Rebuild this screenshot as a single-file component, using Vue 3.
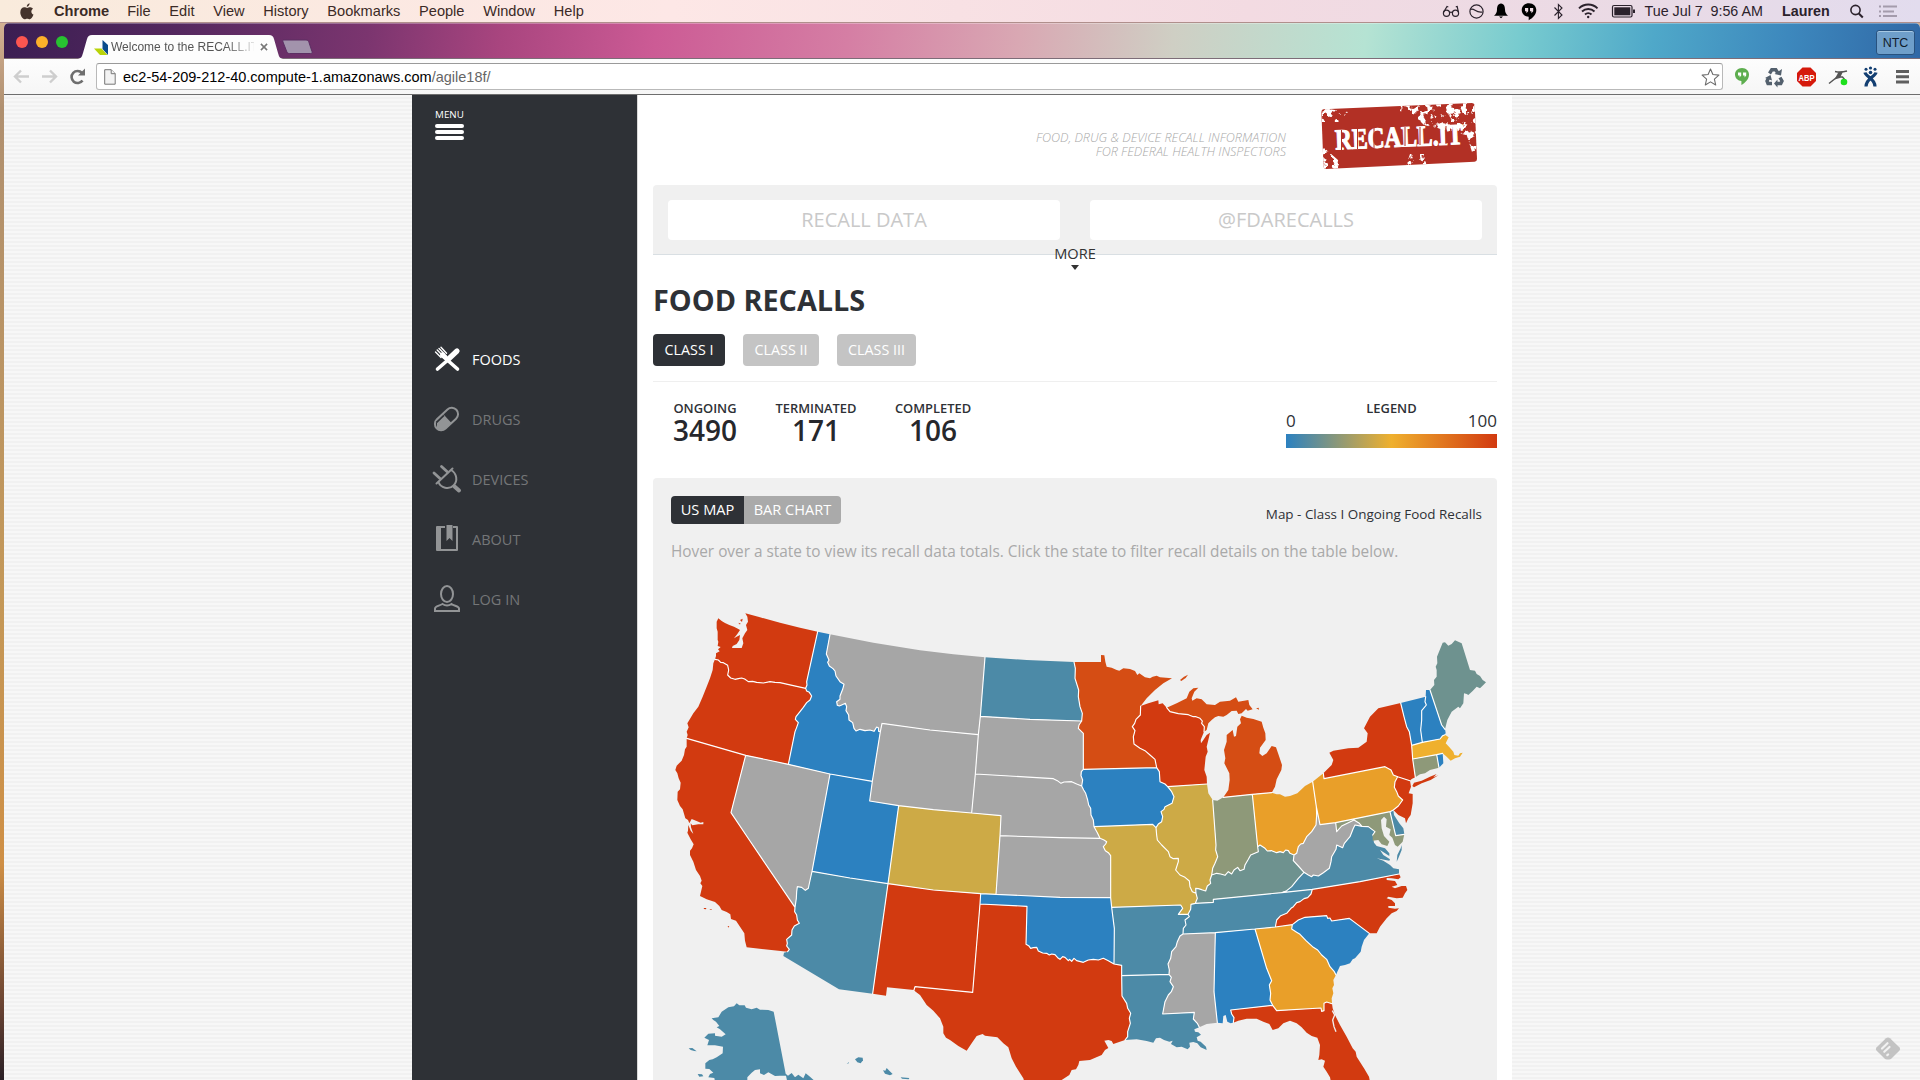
<script setup>
const menus = ['File', 'Edit', 'View', 'History', 'Bookmarks', 'People', 'Window', 'Help']
const nav = [
  { id: 'foods', label: 'FOODS', active: true },
  { id: 'drugs', label: 'DRUGS' },
  { id: 'devices', label: 'DEVICES' },
  { id: 'about', label: 'ABOUT' },
  { id: 'login', label: 'LOG IN' },
]
const classes = ['CLASS I', 'CLASS II', 'CLASS III']
const stats = [
  { id: 'ongoing', label: 'ONGOING', value: '3490' },
  { id: 'terminated', label: 'TERMINATED', value: '171' },
  { id: 'completed', label: 'COMPLETED', value: '106' },
]

// Arcs shared by two states; they are also stroked as the white border mesh.
const shared = {
  waid: '473,125 440,275 441,285 437,295',
  waor: '165,208 175,210 182,217 190,218 203,226 206,240 203,255 212,264 225,268 235,266 245,264 254,267 265,275 278,274 290,277 310,279 330,275 345,277 360,278 400,287 437,295',
  orid: '437,295 440,303 448,307 455,318 450,330 440,338 430,352 420,365 408,380 406,388 415,398 410,412 405,425 385,523',
  orca: '80,445 257,496',
  ornv: '257,496 385,523',
  idnv: '385,523 510,552',
  idut: '510,552 637,574',
  idwy: '637,574 661,425',
  idmt: '510,133 499,192 507,210 503,217 508,228 519,236 525,243 528,258 540,275 552,283 548,298 540,318 540,328 530,335 532,346 538,348 545,345 556,340 560,350 558,362 566,375 567,390 578,398 582,415 588,423 600,418 615,422 630,420 642,424 650,411 655,413 656,424 661,425',
  mtwyw: '661,425 666,400',
  mtwy: '666,400 810,420 955,434',
  mtnd: '975,202 961,379',
  mtsd: '961,379 955,434',
  wysd: '955,434 946,552',
  wyne: '946,552 935,669',
  wyco: '935,669 820,659 716,647',
  wyut: '716,647 629,633 637,574',
  cone: '935,669 1023,677 1020,737',
  coks: '1020,737 1008,913',
  cook: '1008,913 962,911',
  conm: '962,911 820,900 684,881',
  utco: '716,647 684,881',
  utaz: '684,881 570,864 456,844',
  utnv: '510,552 456,844',
  nvaz: '456,844 447,885 445,895 436,901 425,892 412,890 410,905 409,925 405,952',
  canv: '257,496 213,668 268,750 405,952',
  caaz: '405,952 404,965 410,975 412,990 418,1000 403,1008 396,1020 395,1035 380,1048 382,1060 380,1068 388,1078 383,1085',
  aznm: '638,1211 684,881',
  txnm: '762,1200 765,1190 938,1207 960,942',
  oknm: '960,942 962,911',
  txok: '960,942 1101,949 1098,1063 1106,1067 1112,1075 1120,1073 1130,1072 1135,1083 1148,1089 1160,1090 1168,1095 1175,1092 1185,1094 1193,1103 1200,1108 1208,1100 1215,1102 1225,1112 1229,1108 1235,1114 1242,1105 1250,1112 1270,1117 1285,1110 1300,1108 1315,1110 1330,1105 1345,1112 1362,1122',
  okar: '1362,1122 1363,1015 1355,952',
  mook: '1355,952 1352,923',
  ksok: '1352,923 1200,922 1008,913',
  txar: '1362,1122 1385,1126 1385,1157',
  txla: '1385,1157 1386,1218 1400,1240 1403,1255 1412,1270 1408,1285 1411,1300 1403,1325 1403,1340 1395,1350',
  arla: '1385,1157 1527,1153',
  arms: '1569,1032 1560,1038 1552,1055 1548,1070 1535,1085 1532,1105 1524,1122 1528,1140 1527,1153',
  lams: '1527,1153 1534,1162 1530,1175 1540,1190 1534,1205 1525,1215 1515,1235 1508,1272 1603,1267 1600,1287 1612,1300 1618,1312',
  msal: '1672,1298 1662,1205 1666,1028',
  mstn: '1569,1032 1666,1028',
  altn: '1666,1028 1785,1017',
  alga: '1785,1017 1820,1135 1835,1172 1828,1185 1832,1210 1830,1230 1838,1246',
  alfl: '1838,1246 1712,1260 1715,1272 1722,1283 1720,1298',
  gafl: '1838,1246 1850,1262 1983,1254 1985,1264 1992,1262 1992,1240 2000,1236 2016,1241',
  gatn: '1785,1017 1846,1011',
  ganc: '1846,1011 1897,1004',
  gasc: '1897,1004 1895,1017 1910,1027 1920,1033 1938,1052 1960,1072 1973,1080 1985,1095 2000,1108 2010,1130 2023,1145 2028,1155',
  scnc: '1897,1004 1915,990 1935,982 2000,977 2003,985 2010,984 2015,993 2068,985 2128,1030',
  vanc: '2217,852 2100,875 1957,898',
  vatn: '1957,898 1865,908',
  nctn: '1957,898 1953,912 1943,923 1932,926 1920,935 1910,938 1900,950 1893,955 1880,970 1862,977 1850,990 1846,1011',
  kytn: '1865,908 1660,928 1660,937 1606,940',
  kyva: '1865,908 1880,902 1895,890 1915,865 1932,847',
  moky: '1608,910 1612,925 1606,940',
  motn: '1606,940 1593,943 1592,958 1584,973',
  moar: '1584,973 1555,973 1568,955 1562,945 1355,952',
  tnar: '1584,973 1588,980 1575,990 1578,1005 1570,1015 1569,1032',
  nemo: '1302,710 1312,728 1320,745',
  ksmo: '1320,745 1332,750 1340,755 1337,762 1330,770 1336,782 1345,788 1352,797 1352,923',
  neks: '1020,737 1200,743 1320,745',
  neia: '1265,588 1271,600 1277,610 1283,630 1286,645 1292,655 1293,675 1300,690 1302,710',
  sdne: '946,552 1180,566 1192,572 1203,580 1212,576 1235,575 1250,582 1265,588',
  sdia: '1265,588 1268,570 1263,557 1264,545 1270,538',
  sdmn: '1270,538 1270,430 1255,415 1257,405 1265,393',
  ndsd: '961,379 1110,388 1265,393',
  ndmn: '1265,393 1267,370 1260,350 1255,320 1256,300 1245,265 1246,235 1242,216',
  wimn: '1442,348 1441,375 1428,388 1424,400 1417,410 1425,422 1420,440 1422,462 1440,475 1455,482 1470,495 1485,508 1490,533',
  mnia: '1270,538 1490,533',
  iawi: '1490,533 1498,545 1500,575 1515,582 1523,590',
  wiil: '1523,590 1641,582',
  iail: '1523,590 1535,605 1542,620 1536,640 1515,650 1512,658 1503,665 1508,680 1505,695 1495,702 1488,713',
  iamo: '1302,710 1478,703 1488,713',
  ilmo: '1488,713 1490,735 1492,750 1505,765 1525,785 1530,800 1540,806 1555,805 1555,815 1547,840 1560,855 1575,862 1588,873 1590,890 1597,905 1608,910',
  ilky: '1608,910 1607,895 1615,896 1625,899 1637,903 1642,888 1652,880 1650,870 1655,855',
  ilin: '1658,630 1668,765 1667,780 1673,800 1665,820 1658,835 1655,855',
  inmi: '1690,622 1777,613',
  inoh: '1777,613 1793,770',
  inky: '1655,855 1670,850 1682,852 1695,856 1705,845 1715,852 1722,840 1733,832 1740,842 1752,838 1755,825 1765,808 1772,795 1795,785 1793,770',
  miohio: '1777,613 1835,608',
  ohky: '1793,770 1800,765 1815,775 1822,783 1835,782 1850,788 1860,785 1870,788 1877,780 1885,782 1890,790 1902,795',
  kywv: '1902,795 1900,812 1915,828 1932,847',
  ohwv: '1902,795 1910,790 1915,770 1922,762 1930,760 1940,740 1955,725 1968,705 1970,675 1969,650',
  ohpa: '1969,650 1958,575',
  pany: '1990,550 1992,566 2175,530 2193,540 2200,555 2213,560',
  njny: '2213,560 2250,572',
  panj: '2213,560 2205,575 2203,592 2210,605 2215,618 2228,630 2215,648 2200,660',
  pade: '2200,660 2190,665',
  pamd: '2190,665 2027,698',
  pawv: '2027,698 1980,704 1969,650',
  wvmd: '2027,698 2030,725 2045,708 2065,698 2082,690 2098,700 2106,709',
  vawv: '1932,847 1945,855 1955,860 1960,855 1975,858 1990,848 2008,835 2013,815 2015,800 2028,778 2030,765 2048,773 2053,760 2070,740 2080,715 2085,705 2106,709',
  vamd: '2106,709 2125,710 2145,725 2138,735',
  demd: '2190,665 2207,737 2233,733',
  nyvt: '2222,339 2232,380 2240,410 2248,425 2255,466',
  nyma: '2255,466 2258,507',
  nyct: '2258,507 2266,562',
  vtnh: '2297,320 2295,335 2299,345 2285,362 2285,390 2282,420 2287,457',
  vtma: '2255,466 2287,457',
  nhma: '2287,457 2340,447 2348,437 2355,434',
  nhme: '2310,300 2345,405 2355,418',
  mari: '2348,490 2330,494',
  mact: '2330,494 2258,507',
  ctri: '2330,494 2337,533',
  wimi: '1520,353 1530,365 1555,371 1585,374 1600,380 1608,380 1620,385 1627,393 1625,400 1633,410 1632,425',
}

// Coasts and national borders, used by one state only.
const outer = {
  wa: '165,208 168,198 168,190 179,184 174,178 182,171 173,168 175,155 173,150 173,125 170,115 170,95 175,85 185,93 195,99 208,105 222,110 235,117 240,120 232,132 222,145 230,140 240,135 238,150 230,162 218,168 216,174 232,174 245,174 250,160 247,145 255,130 262,120 258,105 264,95 262,80 256,70 300,82 360,98 420,113 473,125',
  or: '165,208 160,220 158,240 150,265 140,290 128,320 115,350 100,370 88,390 82,400 86,412 80,425 83,435 80,445',
  id: '473,125 510,133',
  mt: '510,133 640,158 780,181 880,193 975,202',
  nd: '975,202 1100,210 1242,216',
  ca: '80,445 80,470 75,478 72,495 65,512 50,527 46,540 52,550 56,565 62,578 60,598 53,605 52,630 60,648 68,658 76,685 84,690 88,700 95,687 108,692 122,698 130,696 130,703 115,703 97,706 92,700 93,712 100,732 92,722 85,705 84,722 82,728 92,748 101,763 96,775 90,782 90,795 100,815 108,840 120,858 125,872 121,880 127,888 120,918 140,928 165,936 178,948 185,960 200,966 211,973 213,987 228,992 240,1010 253,1030 255,1052 260,1072 383,1085',
  az: '383,1085 372,1088 370,1098 537,1198 638,1211',
  nm: '638,1211 678,1217 681,1192 762,1200',
  tx: '762,1200 765,1204 780,1215 800,1245 820,1262 840,1285 850,1310 850,1330 858,1343 870,1350 895,1368 920,1382 935,1360 950,1338 968,1332 975,1337 1012,1342 1030,1360 1045,1372 1055,1405 1068,1430 1090,1465 1100,1500 1185,1500 1205,1470 1228,1455 1235,1440 1248,1438 1255,1425 1258,1413 1290,1410 1325,1395 1335,1380 1345,1374 1333,1352 1345,1350 1355,1353 1360,1362 1395,1350',
  la: '1395,1350 1430,1348 1460,1353 1480,1358 1488,1345 1500,1343 1512,1350 1528,1355 1538,1352 1533,1362 1550,1372 1565,1370 1583,1378 1590,1370 1588,1358 1600,1356 1612,1360 1622,1372 1640,1380 1638,1370 1622,1355 1613,1352 1610,1342 1623,1334 1615,1327 1605,1325 1603,1318 1618,1312',
  ms: '1618,1312 1640,1302 1672,1298',
  al: '1672,1298 1688,1300 1690,1278 1697,1275 1702,1295 1712,1300 1720,1298',
  fl: '1720,1298 1735,1292 1760,1286 1790,1286 1810,1295 1828,1302 1838,1320 1855,1315 1870,1300 1890,1292 1910,1300 1925,1312 1940,1328 1955,1338 1972,1343 1980,1365 1978,1395 1975,1410 1985,1408 1995,1412 1990,1430 2000,1445 2010,1462 2018,1500 2135,1500 2127,1460 2112,1435 2090,1400 2087,1385 2078,1375 2060,1340 2040,1305 2025,1275 2018,1255 2016,1241',
  ga: '2028,1155 2020,1170 2022,1185 2017,1195 2020,1210 2015,1225 2016,1241',
  sc: '2128,1030 2112,1050 2105,1070 2102,1085 2085,1105 2078,1108 2070,1120 2055,1125 2040,1128 2032,1145 2028,1155',
  nc: '2128,1030 2150,1030 2160,1010 2180,985 2195,970 2210,963 2217,955 2205,956 2185,953 2185,948 2205,948 2205,940 2195,930 2180,925 2185,920 2210,925 2228,923 2235,910 2242,900 2238,888 2225,888 2205,895 2195,890 2212,885 2205,873 2180,870 2180,864 2195,865 2215,868 2222,862 2217,852',
  mn: '1242,216 1323,216 1323,195 1333,196 1336,215 1340,230 1355,233 1370,240 1378,242 1390,235 1410,237 1425,243 1432,255 1438,250 1455,262 1470,265 1478,260 1490,257 1500,262 1536,265 1510,280 1485,300 1460,325 1442,348',
  win: '1442,348 1465,340 1495,331 1496,343 1508,340 1520,353',
  wie: '1632,425 1622,450 1623,460 1630,450 1640,435 1650,428 1645,450 1640,470 1643,485 1637,500 1633,540 1640,560 1641,582',
  mi1: '1520,353 1550,340 1580,325 1588,305 1600,295 1615,293 1603,305 1595,325 1597,332 1610,325 1625,328 1640,343 1665,345 1680,335 1710,332 1728,322 1735,335 1765,330 1768,345 1778,358 1763,362 1758,357 1745,370 1735,372 1730,362 1715,363 1700,375 1690,380 1675,378 1665,382 1655,390 1645,400 1640,420 1632,425',
  mi2: '1690,622 1705,600 1709,570 1708,550 1693,520 1696,505 1692,480 1700,455 1700,435 1718,420 1722,440 1728,438 1732,410 1743,400 1740,388 1745,377 1760,383 1780,387 1805,395 1810,413 1816,430 1817,450 1800,473 1798,490 1807,498 1820,490 1835,468 1848,472 1856,495 1866,525 1864,540 1850,568 1845,590 1835,608',
  il: '1641,582 1645,610 1658,630',
  inn: '1658,630 1672,632 1690,622',
  oh: '1835,608 1850,613 1860,613 1875,620 1890,618 1912,610 1935,588 1958,575',
  pa: '1958,575 1990,550',
  ny: '1990,550 2015,525 2020,510 2008,488 2020,482 2065,475 2095,473 2120,455 2123,430 2112,415 2130,380 2155,355 2222,339',
  nys: '2266,562 2255,567 2250,572',
  nj: '2200,660 2215,675 2235,685 2238,700 2245,685 2252,675 2258,640 2258,612 2246,610 2253,590 2250,572',
  de: '2200,660 2202,675 2218,700 2230,715 2233,733',
  md: '2138,735 2138,752 2155,750 2165,763 2182,768 2188,755 2172,738 2165,715 2163,690 2172,680 2180,688 2178,710 2192,718 2188,735 2197,743 2205,765 2213,770 2228,755 2233,733',
  va: '2138,735 2142,758 2150,768 2175,775 2188,790 2188,798 2160,780 2170,795 2190,808 2188,812 2150,805 2170,812 2190,825 2200,835 2217,838 2217,852',
  vt: '2222,339 2297,320',
  nh: '2297,320 2298,300 2310,300',
  nhc: '2355,418 2357,428 2355,434',
  me: '2310,300 2323,285 2322,270 2330,260 2330,240 2327,230 2332,220 2331,200 2348,158 2355,157 2365,167 2375,162 2385,151 2405,160 2430,240 2445,242 2450,252 2460,258 2468,270 2478,277 2470,285 2460,295 2450,290 2438,303 2425,315 2420,312 2412,310 2410,340 2400,355 2395,350 2385,358 2375,365 2362,390 2355,418',
  ma: '2355,434 2366,442 2357,460 2367,470 2380,485 2383,495 2395,497 2400,490 2408,488 2400,500 2385,505 2372,512 2360,500 2348,490',
  ri: '2348,490 2350,520 2337,533',
  ct: '2337,533 2310,540 2295,550 2280,553 2266,562',
}

const RED = '#d23a10', BLUE = '#2c81c0', GRAY = '#a6a6a6', TEAL = '#4c8aa7'
const GOLD = '#cdaa46', ORANGE = '#e99f29', RUST = '#d54d14', SAGE = '#8e9979', SEA = '#6e928f'

const states = [
  ['WA', RED, 'wa waid -waor'],
  ['OR', RED, 'waor orid -ornv -orca -or'],
  ['CA', RED, 'orca canv caaz -ca'],
  ['ID', BLUE, 'id idmt -idwy -idut -idnv -orid -waid'],
  ['NV', GRAY, 'ornv idnv utnv nvaz -canv'],
  ['MT', GRAY, 'mt mtnd mtsd -mtwy -mtwyw -idmt'],
  ['WY', GRAY, 'mtwyw mtwy wysd wyne wyco wyut idwy'],
  ['UT', BLUE, 'idut -wyut utco utaz -utnv'],
  ['CO', GOLD, '-wyco cone coks cook conm -utco'],
  ['AZ', TEAL, 'az aznm utaz nvaz caaz'],
  ['NM', RED, 'nm txnm oknm conm -aznm'],
  ['ND', TEAL, 'nd -ndmn -ndsd -mtnd'],
  ['SD', GRAY, 'ndsd -sdmn -sdia -sdne -wysd -mtsd'],
  ['NE', GRAY, 'sdne neia nemo -neks -cone -wyne'],
  ['KS', GRAY, 'neks ksmo ksok -coks'],
  ['OK', BLUE, '-ksok -mook -okar -txok oknm -cook'],
  ['TX', RED, 'txok txar txla -tx txnm'],
  ['MN', RUST, 'mn wimn -mnia sdmn ndmn'],
  ['IA', BLUE, 'mnia iawi iail -iamo -neia sdia'],
  ['MO', GOLD, 'iamo ilmo moky motn moar mook -ksmo -nemo'],
  ['AR', TEAL, '-moar tnar arms -arla -txar -okar'],
  ['LA', TEAL, 'arla lams -la -txla'],
  ['WI', RED, 'win wimi wie -wiil -iawi -wimn'],
  ['IL', GOLD, 'wiil il ilin -ilky -ilmo -iail'],
  ['IN', SAGE, 'inn inmi inoh -inky -ilin'],
  ['MI-UP', RUST, 'mi1 -wimi'],
  ['MI', RUST, 'mi2 -miohio -inmi'],
  ['OH', ORANGE, 'miohio oh -ohpa -ohwv -ohky -inoh'],
  ['KY', SEA, 'ilky inky ohky kywv -kyva kytn -moky'],
  ['TN', TEAL, '-kytn -vatn nctn -gatn -altn -mstn -tnar -motn'],
  ['MS', GRAY, 'mstn -msal -ms -lams -arms'],
  ['AL', BLUE, 'altn alga alfl -al msal'],
  ['GA', ORANGE, 'gatn ganc gasc ga -gafl -alga'],
  ['FL', RED, 'gafl -fl -alfl'],
  ['SC', BLUE, 'scnc sc -gasc'],
  ['NC', RED, '-nc -scnc -ganc -nctn -vanc'],
  ['VA', TEAL, 'vawv vamd va vanc vatn kyva'],
  ['WV', GRAY, '-pawv wvmd -vawv -kywv ohwv'],
  ['PA', ORANGE, 'pa pany panj pade pamd pawv ohpa'],
  ['MD', SAGE, '-pamd demd -md -vamd -wvmd'],
  ['DE', TEAL, 'de -demd -pade'],
  ['NJ', RED, 'njny -nj -panj'],
  ['NY', RED, 'ny nyvt nyma nyct nys -njny -pany'],
  ['VT', BLUE, 'vt vtnh -vtma -nyvt'],
  ['NH', BLUE, 'nh nhme nhc -nhma -vtnh'],
  ['ME', SEA, 'me -nhme'],
  ['MA', '#efb02e', 'nhma ma mari mact -nyma vtma'],
  ['CT', SAGE, '-mact ctri ct -nyct'],
  ['RI', BLUE, '-mari ri -ctri'],
]

const pts = (s) => s.split(' ')

// Joins arcs end to end, turning an arc round when its tail is the closer end.
function ring(spec) {
  const arcs = spec.split(' ').map((n) => {
    const key = n.replace('-', '')
    return pts(shared[key] || outer[key])
  })
  const out = [...arcs[0]]
  if (arcs[1] && !arcs[1].includes(out[out.length - 1]) && arcs[1].includes(out[0])) out.reverse()
  if (arcs.length === 2 && spec.startsWith('-')) out.reverse()
  let rest = arcs.slice(1)
  while (rest.length) {
    const tail = out[out.length - 1]
    const i = rest.findIndex((a) => a[0] === tail || a[a.length - 1] === tail)
    const k = i < 0 ? 0 : i
    const a = rest[k]
    out.push(...(a[a.length - 1] === tail ? [...a].reverse() : a))
    rest = rest.filter((_, j) => j !== k)
  }
  return 'M' + out.join('L') + 'Z'
}

const statePaths = states.map(([id, fill, spec]) => ({ id, fill, d: ring(spec) }))
const mesh = Object.values(shared).map((s) => 'M' + pts(s).join('L')).join('')

const islands = [
  [RED, '2257,588 2262,578 2285,572 2310,560 2330,552 2320,562 2335,556 2312,570 2285,580 2262,592'],
  [TEAL, '2225,765 2222,775 2212,795 2210,815 2215,805 2225,780'],
  [RUST, '1560,270 1572,260 1584,254 1577,264 1564,273'],
  [RUST, '1788,355 1796,353 1797,359'],
  [RED, '131,954 139,954 138,958 132,957'],
  [RED, '148,957 155,957 154,960'],
  [RED, '203,1008 208,1009 205,1013'],
  [RED, '240,90 248,86 246,96'],
  [RED, '236,98 243,102 237,103'],
  [TEAL, '86,1375 97,1374 110,1384 103,1383 92,1380'],
  [TEAL, '113,1452 126,1453 130,1459 118,1460'],
  [TEAL, '585,1408 595,1402 608,1403 609,1411 602,1420 592,1417'],
  [TEAL, '560,1422 567,1416 566,1420'],
  [TEAL, '669,1441 676,1442 680,1434 688,1442 698,1452 690,1456 675,1451'],
  [TEAL, '722,1462 748,1464 746,1468 726,1466'],
  [TEAL, '155,1285 175,1282 185,1265 205,1252 222,1249 230,1240 238,1246 254,1246 258,1253 275,1258 290,1253 300,1259 325,1260 341,1265 377,1451 384,1457 395,1449 405,1462 415,1454 430,1465 437,1450 450,1460 463,1472 463,1490 385,1490 378,1457 360,1457 345,1458 325,1447 312,1455 300,1450 300,1438 285,1440 275,1448 262,1462 262,1490 168,1490 163,1464 145,1462 150,1452 160,1448 148,1437 136,1436 136,1420 148,1410 158,1408 170,1402 188,1390 189,1370 165,1366 142,1366 147,1350 133,1343 145,1331 165,1330 165,1337 185,1340 197,1333 180,1318 170,1312 178,1308 168,1295 160,1290'],
].map(([fill, p]) => ({ fill, d: 'M' + pts(p).join('L') + 'Z' }))
</script>

<template>
  <div class="screen">
    <div class="menubar">
      <svg class="apple" width="14" height="17" viewBox="0 0 14 17"><path fill="#45342c" d="M9.6.2C9.7 1.9 8.400 3.600 6.800 3.700 6.600 2.100 8 .5 9.600.2ZM12.900 5.700C10.600 7.200 11 10.500 13.500 11.600 12.700 13.800 11.200 16.300 9.800 16.300 8.800 16.300 8.400 15.700 7.200 15.700 6 15.700 5.500 16.300 4.700 16.300 2.600 16.400.3 12.500.3 9.300.3 6.100 2.300 4.300 4.300 4.300 5.500 4.300 6.400 5 7.200 5 7.900 5 9.100 4.200 10.500 4.300 11.400 4.400 12.300 4.800 12.900 5.700Z"/></svg>
      <b class="app">Chrome</b>
      <span v-for="m in menus" :key="m" class="mi">{{ m }}</span>
      <div class="tray">
        <svg class="t-icons" width="200" height="22" viewBox="1435 0 200 22" fill="none" stroke="#2b222c" stroke-width="1.200">
          <circle cx="1444.500" cy="13.300" r="3.100"/><circle cx="1453.500" cy="13.300" r="3.100"/><path d="M1447.600 12.600q1.400-1 2.800 0M1441.600 12.300 1445 6.500l1.300.5M1456.400 12.300 1455.200 6.500l-1.400.4"/>
          <circle cx="1474.500" cy="11.500" r="6.600"/><path d="M1468.500 9.500c4-2 5 4 12 2.500"/>
          <path fill="#000" stroke="none" d="M1499 3.500c-3.200.6-4 3-4 6 0 3-1 4.500-3 6.300h14c-2-1.800-3-3.300-3-6.300 0-3-.8-5.400-4-6zM1497 16.500h4l-2 1.800z"/>
          <path fill="#000" stroke="none" d="M1527 3.200c-4.500 0-7.300 3-7.300 6.800 0 3.700 3 6.600 7 6.700v3.500c4-2 7.600-5.700 7.600-10.200 0-3.800-2.800-6.800-7.300-6.800z"/><path fill="#eedbe3" stroke="none" d="M1523 8h3.200v3.200l-1.800 2v-2H1523zM1528 8h3.200v3.200l-1.800 2v-2H1528z"/>
          <path stroke-width="1.100" d="M1552.500 7.500l7.500 7.500-3.600 3.500V4.500l3.600 3.500-7.500 7.500"/>
          <path stroke-width="1.900" d="M1577 8.300a13 13 0 0 1 18.500 0M1580 11.500a9 9 0 0 1 12.500 0M1583 14.500a4.800 4.800 0 0 1 6.500 0"/><circle cx="1586.200" cy="17" r="1.200" fill="#2b222c" stroke="none"/>
          <rect x="1610.500" y="5.500" width="19.500" height="11.500" rx="1.500"/><rect x="1612.300" y="7.300" width="16" height="8" fill="#2b222c" stroke="none"/><path stroke-width="2" d="M1632 9.500v3.500"/>
        </svg>
        <span class="date">Tue Jul 7</span><span class="time">9:56 AM</span><b class="user">Lauren</b>
        <svg class="find" width="50" height="22" viewBox="1848 0 50 22" fill="none" stroke="#2b222c" stroke-width="1.600"><circle cx="1855.500" cy="10" r="4.600"/><path stroke-width="2" d="M1858.800 13.500l4 4"/><path stroke="#a49bac" stroke-width="2" d="M1883 6.500h14M1883 11.500h11M1883 16h14M1879 6.500h2M1879 11.500h2M1879 16h2"/></svg>
      </div>
    </div>

    <div class="window">
      <div class="tabs">
        <span class="light l1"></span><span class="light l2"></span><span class="light l3"></span>
        <div class="tab">
          <svg class="tabshape" width="206" height="24" viewBox="0 0 206 24"><path fill="#fdfdfd" d="M0 24C4 23 4 21 5 18L9 4C10 1 11 0 14 0H191C194 0 195 1 196 4L200 18C201 21 201 23 205 24Z"/></svg>
          <svg class="fav" width="15" height="15" viewBox="0 0 15 15"><path fill="#0a4b8c" d="M8.500 0 14 5v10L8.500 9z"/><path fill="#b9d309" d="M0 8.500h7.500l6 6.500H6z"/></svg>
          <span class="tabtitle">Welcome to the RECALL.IT</span>
          <svg class="x" width="8" height="8" viewBox="0 0 9 9" stroke="#777" stroke-width="1.700"><path d="M1 1l7 7M8 1 1 8"/></svg>
        </div>
        <svg class="newtab" width="32" height="16" viewBox="0 0 32 16"><path fill="#a293ac" stroke="#5c2f63" d="M3 1h22c2 0 2.500 1 3 2.500l3 9c.5 1.500 0 2-1.500 2H8.500c-2 0-2.500-1-3-2.500l-3.500-9C1.500 1.500 2 1 3 1z"/></svg>
        <span class="ntc">NTC</span>
      </div>

      <div class="toolbar">
        <svg class="tb-left" width="84" height="34" viewBox="10 60 84 34" fill="none" stroke-width="2.400">
          <path stroke="#cecece" d="M29 76.500H15.500M21 70.500l-6 6 6 6M42 76.500h13.500M50 70.500l6 6-6 6"/>
          <path stroke="#6e6e6e" stroke-width="2.600" d="M82.500 80.500a6 6 0 1 1-.5-7.500"/><path fill="#6e6e6e" d="M85 68.500v7h-7z"/>
        </svg>
        <div class="url">
          <svg width="12" height="16" viewBox="0 0 12 16" fill="#f3f3f3" stroke="#777"><path d="M.7.7h6.500l4 4v10.500H.7z"/><path d="M7.200.7v4h4"/></svg>
          <span class="addr">ec2-54-209-212-40.compute-1.amazonaws.com<i>/agile18f/</i></span>
          <svg class="star" width="19" height="18" viewBox="0 0 19 18"><path fill="#fff" stroke="#6b6b6b" stroke-width="1.100" stroke-linejoin="round" d="M9.500 1l2.400 5.500 6 .6-4.500 4 1.300 5.900-5.200-3.100L4.300 17l1.300-5.900-4.500-4 6-.6z"/></svg>
        </div>
        <svg class="ext" width="186" height="34" viewBox="1731 60 186 34">
          <path fill="#5eae4f" d="M1742 68c-4.400 0-7 3-7 6.500 0 3.700 3 6.400 6.400 6.500v4c3.600-2 7.600-5.700 7.600-10.500 0-3.500-2.600-6.500-7-6.500z"/><path fill="#fff" d="M1738 72.500h3.200v3l-1.600 2v-2H1738zM1743 72.500h3.200v3l-1.600 2v-2H1743z"/>
          <g fill="none" stroke="#53606d" stroke-width="3.400"><path d="M1769.500 73.500l2.300-3.700h4l2 3.200M1780 77.500l2 3.500-1.200 2.500h-3.800M1772 83.500h-4l-1-2.500 1.500-3"/></g><path fill="#53606d" d="M1774.500 74l6.500 1.500 1-6.500zM1777.500 79.500v8l-3.500-4zM1765 78l5.500-3 1.500 5.500z"/>
          <path fill="#d5190b" d="M1802.500 67.500h8l5.500 5.500v8l-5.500 5.500h-8l-5.500-5.500v-8z"/>
          <text x="1806.500" y="81" text-anchor="middle" font-size="9.800" font-weight="bold" textLength="16" lengthAdjust="spacingAndGlyphs" fill="#fff">ABP</text>
          <path fill="none" stroke="#555" stroke-width="1.500" d="M1829 83.500l10-8M1835 71.500c4 1 7 1 12-.5M1838 77h4.500l2.500 3"/><path fill="#555" d="M1834.500 79.500l4-7.500 4.500-.5-3 6.500z"/><circle cx="1844" cy="82" r="3.300" fill="#1de01d"/>
          <g fill="none" stroke="#133f72" stroke-width="3.200"><path d="M1865 72.500c1 4.500 10 5.500 10 14M1876 72.500c-1 4.500-10 5.500-10 14"/></g><g fill="#133f72"><circle cx="1866" cy="69.200" r="1.500"/><circle cx="1870.500" cy="68" r="1.600"/><circle cx="1875" cy="69.200" r="1.500"/><circle cx="1870.500" cy="72.500" r="1.800"/></g>
          <path stroke="#5f5f5f" stroke-width="3" d="M1896 71.500h13M1896 76.700h13M1896 81.900h13"/>
        </svg>
      </div>

      <div class="page">
        <aside class="side">
          <div class="menu"><span>MENU</span><i></i><i></i><i></i></div>
          <nav>
            <div v-for="n in nav" :key="n.id" class="navitem" :class="{ on: n.active }">
              <svg v-if="n.id === 'foods'" width="30" height="30" viewBox="0 0 30 30" fill="none" stroke="#fff" stroke-linecap="round"><path stroke-width="3.600" d="M5.500 25 16.500 15.500"/><path stroke-width="5.200" d="M16 15.500 25 7"/><path stroke-width="3.600" d="M13 14 25.500 25"/><path stroke-width="1.400" d="M3.500 8 9 13.500M5.200 6 10.500 11.500M7 4.500 12.500 10M9 3.200l5.500 6"/><path stroke-width="5" d="M10.500 11 13 13"/></svg>
              <svg v-else-if="n.id === 'drugs'" width="30" height="30" viewBox="0 0 30 30" fill="none"><g transform="rotate(-43 14.500 15)"><rect x="1" y="8.700" width="27" height="12.600" rx="6.300" stroke="#929496" stroke-width="2"/><path fill="#929496" d="M7.300 9H15.500v9.500 2.800H7.300a6.200 6.200 0 0 1-6-6.300z"/><path fill="#2e3136" d="M5 9.800h10V11.500H5z"/></g></svg>
              <svg v-else-if="n.id === 'devices'" width="30" height="30" viewBox="0 0 30 30" fill="none" stroke="#929496" stroke-width="2" stroke-linecap="round"><path d="M4.500 19.500 20.500 4.500M6.500 18c2 6 10.500 8 15 3.500s3.500-12-2.500-15.500"/><path stroke-width="2.800" d="M2 9l6 5.500M9.500 2.500l6 5.500"/><path stroke-width="4" d="M22.500 22.500 27 26.500"/></svg>
              <svg v-else-if="n.id === 'about'" width="30" height="30" viewBox="0 0 30 30" fill="#929496"><path d="M4 3q0-1 1-1h8v2H9v21h15V4h-3V2h4q1 0 1 1v23q0 1-1 1H5q-1 0-1-1z"/><path d="M14.500 1h6v16l-3-3-3 3z"/></svg>
              <svg v-else width="30" height="30" viewBox="0 0 30 30" fill="none" stroke="#929496" stroke-width="2"><ellipse cx="15" cy="10" rx="6" ry="8"/><path d="M10.500 20C7 22 3 22 3 24.500V27h24v-2.500C27 22 22 22 19.500 20c-3 2-6 2-9 0z"/></svg>
              <span>{{ n.label }}</span>
            </div>
          </nav>
        </aside>

        <main class="main">
          <header class="head">
            <p class="tagline">FOOD, DRUG &amp; DEVICE RECALL INFORMATION<br>FOR FEDERAL HEALTH INSPECTORS</p>
            <svg class="logo" width="160" height="72" viewBox="1320 100 160 72">
              <defs>
                <filter id="wear" x="0" y="0" width="100%" height="100%">
                  <feTurbulence type="fractalNoise" baseFrequency="0.150 0.130" numOctaves="4" seed="8"/>
                  <feColorMatrix values="0 0 0 0 1  0 0 0 0 1  0 0 0 0 1  11 0 0 0 -5.700"/>
                </filter>
                <clipPath id="worn"><path d="M1396 101h84v26l-14 8-42-10-10-10-22-6zM1462 120h20v28l-10 4zM1404 172l6-18 14 0 4 18zM1322 146l16 14 4 12h-20zM1322 108l26 4-10 10h-16z"/></clipPath>
                <clipPath id="stamp"><path d="M1323.500 109.300 1472 103q2.500 0 2.700 2.500L1477 159q0 2.500-2.500 2.800L1326 169q-2.300 0-2.500-2.500L1321.400 112q0-2.500 2.100-2.700z"/></clipPath>
              </defs>
              <g clip-path="url(#stamp)">
                <rect x="1320" y="100" width="160" height="72" fill="#b23025"/>
                <g clip-path="url(#worn)"><rect x="1320" y="100" width="160" height="72" filter="url(#wear)"/></g>
              </g>
              <text class="logotext" x="1335.500" y="149.500" transform="rotate(-2.500 1335 149)" textLength="128" lengthAdjust="spacingAndGlyphs">RECALL.IT</text>
              <path stroke="#b23025" stroke-width="1" d="M1341.500 130v20M1357.500 129v20M1374 128v20M1405 127v19M1420 127v18M1446 126v18"/>
            </svg>
          </header>

          <section class="tabsbox">
            <div class="field">RECALL DATA</div>
            <div class="field">@FDARECALLS</div>
            <div class="more">MORE<b></b></div>
          </section>

          <h1>FOOD RECALLS</h1>
          <div class="classes"><span v-for="(c, i) in classes" :key="c" :class="{ on: i === 0 }">{{ c }}</span></div>

          <section class="summary">
            <div v-for="s in stats" :key="s.id" class="stat" :class="s.id"><small>{{ s.label }}</small><strong>{{ s.value }}</strong></div>
            <div class="legend">
              <small>LEGEND</small>
              <div class="range"><span>0</span><span>100</span></div>
              <div class="bar"></div>
            </div>
          </section>

          <section class="panel">
            <div class="phead">
              <div class="toggle"><span class="on">US MAP</span><span>BAR CHART</span></div>
              <span class="ptitle">Map - Class I Ongoing Food Recalls</span>
            </div>
            <p class="hint">Hover over a state to view its recall data totals. Click the state to filter recall details on the table below.</p>
            <svg class="map" width="844" height="490" viewBox="-21 0 2532 1470">
              <path v-for="s in statePaths" :key="s.id" :d="s.d" :fill="s.fill"/>
              <path v-for="(s, i) in islands" :key="i" :d="s.d" :fill="s.fill"/>
              <path :d="mesh" fill="none" stroke="#fff" stroke-width="3.400" stroke-linejoin="round" stroke-linecap="round"/>
              <path d="M2017,1262L2024,1275L2018,1290L2022,1310L2028,1325" fill="none" stroke="#f0f0f0" stroke-width="4"/>
            </svg>
          </section>
        </main>
      </div>
    </div>
    <svg class="feedly" width="26" height="24" viewBox="0 0 26 24"><path fill="#c3c3c3" d="M11 1.200q2-1.600 4 0l9.300 9q1.600 1.800 0 3.600L16.500 21.500q-1 .9-2.500.9h-2q-1.500 0-2.500-.9L1.700 13.800q-1.600-1.800 0-3.600z"/><path fill="none" stroke="#f2f2f2" stroke-width="2.200" stroke-linecap="round" d="M7 11.500 12.500 6.200M9.300 14.800 14.500 10M12.300 18.200l.8-.7"/></svg>
  </div>
</template>

<style>
body { margin: 0; overflow: hidden; }
</style>

<style scoped>
.screen { position: relative; width: 1920px; height: 1080px; overflow: hidden; display: flex; flex-direction: column; background: linear-gradient(#dcb99c, #b09070 10%, #c49858 55%, #cf8f45 80%, #6b4433 93%, #2a2026); font-family: "Open Sans", sans-serif; color: #2e3136; }
.menubar { flex: none; height: 22px; box-sizing: content-box; border-bottom: 1px solid #b08f8c; background: linear-gradient(90deg, #f9ebdc, #fde7e6 35%, #f3dbe2 65%, #eadae5 85%, #e2dcee); display: flex; align-items: center; font: 14.600px "Liberation Sans", sans-serif; color: #3b2a26; }
.apple { margin: 0 20px 0 20px; }
.app { margin-right: 18px; }
.mi { margin-right: 18.700px; }
.tray { margin-left: auto; display: flex; align-items: center; color: #2b222c; font-size: 14.300px; }
.t-icons { margin-right: -1px; }
.date { margin-left: 9px; width: 66px; white-space: nowrap; }
.time { width: 71.500px; white-space: nowrap; }
.user { width: 66px; }
.find { margin-right: 22px; }
.window { flex: 1; margin-left: 4px; border-radius: 5px 5px 0 0; overflow: hidden; display: flex; flex-direction: column; background: #fff; }
.tabs { flex: none; height: 36px; position: relative; display: flex; align-items: center; background: linear-gradient(97deg, #3b1e52 0%, #54285f 9%, #7b356f 19%, #a9457f 26%, #cc5b95 34%, #d57ea4 44%, #d9a8b3 53%, #cfcfc4 61%, #b5e3d3 71%, #78cbcf 79%, #4fa8c9 86%, #3d88bd 93%, #3068a6 100%); box-shadow: inset 0 1px rgba(255,255,255,.3), inset 0 -1px #7d6d78; }
.light { width: 12px; height: 12px; border-radius: 50%; margin-right: 8px; margin-top: 2px; }
.l1 { background: #fc5650; margin-left: 12px; }
.l2 { background: #fdb02a; }
.l3 { background: #28c231; }
.tab { position: relative; width: 206px; height: 24px; align-self: flex-end; margin-left: 2px; display: flex; align-items: center; font: 12px "Liberation Sans", sans-serif; color: #555; }
.tabshape { position: absolute; left: 0; top: 0; }
.fav { position: relative; margin-left: 16px; }
.tabtitle { position: relative; margin-left: 2px; width: 143px; overflow: hidden; white-space: nowrap; -webkit-mask: linear-gradient(90deg, #000 80%, rgba(0,0,0,.15)); mask: linear-gradient(90deg, #000 80%, rgba(0,0,0,.15)); }
.x { position: relative; margin-left: 6px; }
.newtab { margin-left: -3px; align-self: flex-start; margin-top: 16px; }
.ntc { margin-left: auto; margin-right: 5px; margin-top: 2px; width: 37px; height: 23px; border: 1px solid #28527f; border-radius: 3px; background: #6f9fca; color: #0f1c2c; font: 12.500px/24px "Liberation Sans", sans-serif; text-align: center; box-shadow: inset 0 1px #a7c9e4; }
.toolbar { flex: none; height: 35px; border-bottom: 1px solid #6e6e6e; background: linear-gradient(#fdfdfd, #f6f6f6); display: flex; align-items: center; }
.tb-left { margin-left: 6px; }
.url { margin-left: 2px; width: 1625px; height: 25px; border: 1px solid #b9b9b9; border-top-color: #9a9a9a; border-radius: 3px; background: #fff; display: flex; align-items: center; }
.url > svg:first-child { margin-left: 7px; }
.addr { margin-left: 7px; font: 14.500px "Liberation Sans", sans-serif; color: #000; }
.addr i { font-style: normal; color: #666; }
.star { margin-left: auto; margin-right: 2px; }
.ext { margin-left: 8px; font-family: "Liberation Sans", sans-serif; }
.page { flex: 1; min-height: 0; display: flex; background: repeating-linear-gradient(#f7f7f7 0 2px, #f1f1f1 2px 4px); }
.side { flex: none; width: 225px; margin-left: 408px; background: #2e3136; border-right: 1px solid #d9d9d9; }
.menu { margin: 13px 0 0 23px; width: 29px; color: #fff; font-size: 9.800px; line-height: 14px; }
.menu span { display: block; margin-bottom: 2px; text-align: center; white-space: nowrap; }
.menu i { display: block; height: 4px; border-radius: 2px; background: #fff; margin-bottom: 2px; }
nav { margin-top: 189px; }
.navitem { height: 60px; display: flex; align-items: center; color: #747678; font-size: 14.500px; }
.navitem svg { margin-left: 20px; margin-right: 10px; }
.navitem.on { color: #fff; }
.main { flex: none; width: 874px; box-sizing: border-box; background: #fff; padding: 0 15px; height: 985px; overflow: hidden; }
.head { height: 90px; display: flex; }
.tagline { margin: 36px 34px 0 auto; text-align: right; font-size: 12.550px; line-height: 14px; font-style: italic; font-weight: 300; color: #a8a8a8; white-space: nowrap; }
.logo { margin: 5px 17px 0 0; }
.logotext { font: bold 29px "Liberation Serif", serif; fill: #fff; stroke: #fff; stroke-width: 1.100; }
.tabsbox { position: relative; border-bottom: 1px solid #d9dfe3; border-radius: 4px 4px 0 0; background: #f0f0f0; display: flex; padding: 15px 15px 0; box-sizing: border-box; height: 70px; gap: 30px; }
.field { flex: 1; height: 40px; border-radius: 4px; background: #fff; text-align: center; font-size: 20px; line-height: 39px; color: #c9c9c9; }
.more { position: absolute; left: 0; right: 0; top: 58px; text-align: center; font-size: 14.600px; line-height: 20px; color: #333; }
.more b { display: block; width: 0; margin: 2px auto 0; border: 4px solid transparent; border-top: 5px solid #333; }
h1 { margin: 25px 0 0; font-size: 28.800px; line-height: 40px; font-weight: 700; }
.classes { display: flex; gap: 18px; margin-top: 14px; padding-bottom: 15px; border-bottom: 1px solid #efefef; }
.classes span { height: 32px; padding: 0; width: 72px; border-radius: 4px; background: #c4c4c4; color: #fff; text-align: center; font-size: 14.300px; line-height: 32px; }
.classes span:nth-child(2) { width: 76px; }
.classes span:nth-child(3) { width: 79px; }
.classes span.on { background: #2e3136; }
.summary { height: 96px; display: flex; padding-top: 17px; box-sizing: border-box; }
.stat { display: flex; flex-direction: column; align-items: center; }
.ongoing { width: 104px; }
.terminated { width: 118px; }
.completed { width: 116px; }
small { font-size: 12.900px; line-height: 18px; font-weight: 600; }
strong { font-size: 28px; line-height: 27px; font-weight: 600; color: #26272c; }
.legend { margin-left: auto; width: 211px; text-align: center; }
.legend small { display: block; }
.range { display: flex; justify-content: space-between; font-size: 17px; line-height: 20px; margin-top: -6px; }
.bar { height: 14px; margin-top: 3px; background: linear-gradient(90deg, #2c81c0, #efb02e 50%, #d23a10); }
.panel { background: #f0f0f0; border-radius: 4px 4px 0 0; height: 602px; }
.phead { display: flex; padding: 18px 15px 0 18px; height: 28px; }
.toggle { display: flex; border-radius: 4px; overflow: hidden; font-size: 14.600px; line-height: 27px; color: #fff; text-align: center; }
.toggle span { width: 97px; background: #aaa; }
.toggle .on { width: 73px; background: #2e3136; }
.ptitle { margin-left: auto; margin-top: 8px; font-size: 13.450px; line-height: 20px; }
.hint { margin: 18px 0 0 18px; font-size: 15.370px; line-height: 20px; color: #a9a9a9; white-space: nowrap; }
.map { display: block; margin-top: 28px; }
.feedly { position: absolute; left: 1875px; top: 1037px; }
</style>
